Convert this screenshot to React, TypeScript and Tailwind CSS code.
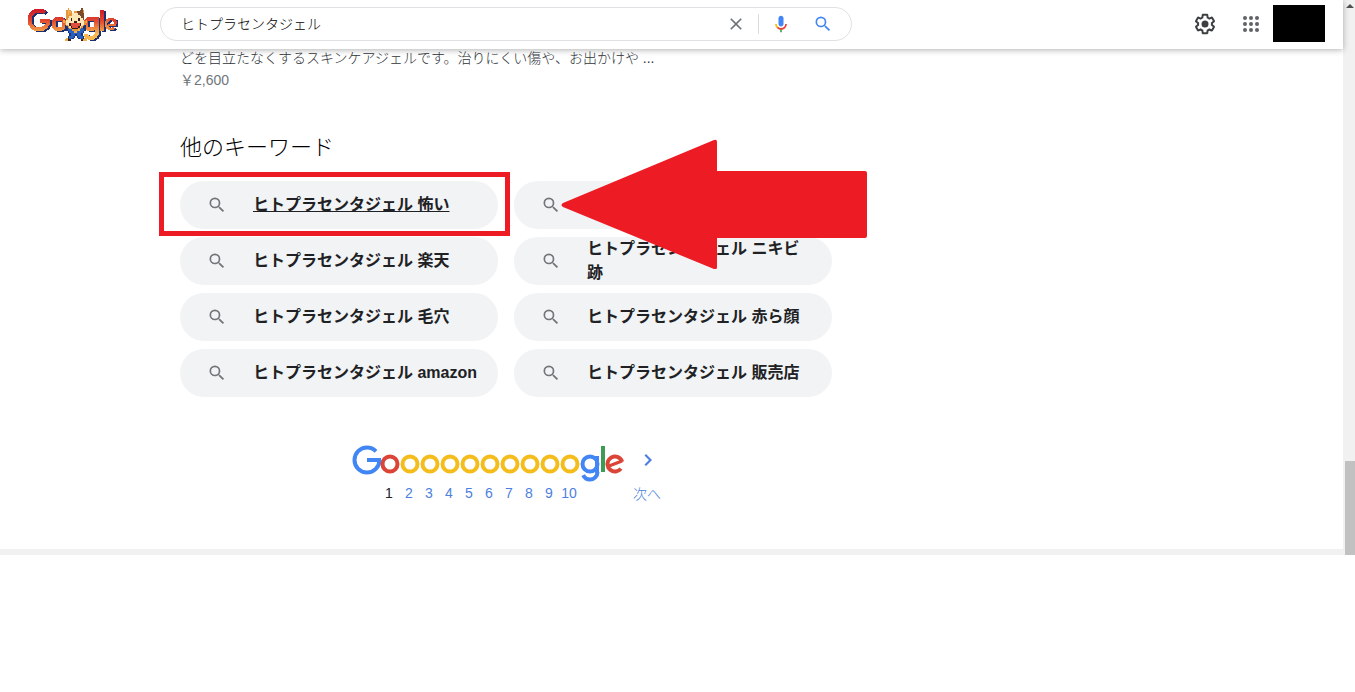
import type { ReactNode } from "react";

const keywords = [
  "ヒトプラセンタジェル 怖い",
  "ヒトプラセンタジェル 効果",
  "ヒトプラセンタジェル 楽天",
  "ヒトプラセンタジェル ニキビ跡",
  "ヒトプラセンタジェル 毛穴",
  "ヒトプラセンタジェル 赤ら顔",
  "ヒトプラセンタジェル amazon",
  "ヒトプラセンタジェル 販売店",
];

const pages = [2, 3, 4, 5, 6, 7, 8, 9, 10];

const catColors: Record<string, string> = {
  o: "#e8963c",
  b: "#7a4a2c",
  w: "#fbe6b4",
  k: "#3a1c20",
  r: "#e0503c",
  n: "#1c3478",
  u: "#2860c0",
  y: "#f0b050",
};

const cat = [
  "...o........b...",
  "..oyo......bbo..",
  "..oyyo.oobbbbo..",
  "..oyoowwwwbbbb..",
  "..oooowwwwwbbb..",
  "..oowwwwwwwwbb..",
  "..owwkwwwwkwwb..",
  "y.wwwkwwwwkwww.y",
  "yowwwwwkkwwwwwoy",
  ".owwkrrrrrrkwwo.",
  ".nowkrrrrrrkwon.",
  ".nnowkrrrrkwonn.",
  "..nuookkkkoounn.",
  "..nuuuooooyuuun.",
  "...nuuuyyuuuun..",
  "....nuuuuuuun...",
  "....nuuunuuun...",
  "...nuuun.nuuun..",
  "..ykuun...nuuky.",
  ".yykk.......kyyy",
];

const SearchIcon = ({ className }: { className: string }) => (
  <svg viewBox="0 0 24 24" className={className} fill="currentColor" aria-hidden="true">
    <path d="M15.5 14h-.79l-.28-.27A6.47 6.47 0 0 0 16 9.5 6.5 6.5 0 1 0 9.5 16c1.61 0 3.09-.59 4.23-1.57l.27.28v.79l5 4.99L20.49 19l-4.99-5zm-6 0a4.5 4.5 0 1 1 0-9 4.5 4.5 0 0 1 0 9z" />
  </svg>
);

const DoodleLetters = ({ paint }: { paint: string }) => (
  <g fill="none" stroke={paint} strokeWidth="4">
    <circle cx="13" cy="14" r="9.5" pathLength="360" strokeDasharray="310 50" />
    <rect x="14" y="13" width="10" height="4" fill={paint} stroke="none" />
    <circle cx="33" cy="18" r="5.5" />
    <circle cx="65" cy="18" r="5.5" />
    <rect x="69" y="11" width="4" height="16" fill={paint} stroke="none" />
    <circle cx="65" cy="26" r="6" pathLength="360" strokeDasharray="160 200" />
    <rect x="74" y="4" width="4" height="21" fill={paint} stroke="none" />
    <circle cx="85" cy="18" r="5" strokeWidth="3" pathLength="360" strokeDasharray="310 50" transform="rotate(50 85 18)" />
    <rect x="82" y="18" width="8" height="2" fill={paint} stroke="none" />
  </g>
);

const Doodle = () => (
  <svg viewBox="0 0 92 36" className="h-9 w-[92px]" shapeRendering="crispEdges" role="img" aria-label="Google">
    <defs>
      <linearGradient id="doodle" x1="0" y1="4" x2="0" y2="28" gradientUnits="userSpaceOnUse">
        <stop offset="0" stopColor="#d01c28" />
        <stop offset="0.45" stopColor="#e04830" />
        <stop offset="1" stopColor="#f8b850" />
      </linearGradient>
    </defs>
    <g transform="translate(2 1)">
      <DoodleLetters paint="#1c3070" />
    </g>
    <DoodleLetters paint="url(#doodle)" />
    {cat.map((row, y) =>
      row.split("").map((c, x) =>
        c === "." ? null : (
          <rect key={`${x}-${y}`} x={37 + x * 1.5} y={2 + y * 1.65} width="1.6" height="1.7" fill={catColors[c]} />
        ),
      ),
    )}
  </svg>
);

const Header = () => (
  <header className="relative flex h-[49px] items-center bg-white pb-0.5 shadow-[0_1px_6px_rgba(32,33,36,0.35)]">
    <a href="#top" className="ml-[26px] w-[134px] shrink-0">
      <Doodle />
    </a>
    <form className="flex h-[34px] w-[692px] items-center rounded-full border border-[#dfe1e5] bg-white pl-5">
      <input
        type="text"
        aria-label="検索"
        defaultValue="ヒトプラセンタジェル"
        className="min-w-0 flex-1 bg-transparent text-sm font-light text-black outline-none"
      />
      <button type="button" aria-label="クリア" className="mr-3 text-[#70757a]">
        <svg viewBox="0 0 24 24" className="size-5" fill="currentColor">
          <path d="M19 6.41 17.59 5 12 10.59 6.41 5 5 6.41 10.59 12 5 17.59 6.41 19 12 13.41 17.59 19 19 17.59 13.41 12z" />
        </svg>
      </button>
      <span className="h-5 w-px bg-[#dadce0]" />
      <button type="button" aria-label="音声検索" className="ml-3">
        <svg viewBox="0 0 24 24" className="size-5">
          <path fill="#4285f4" d="M12 15c1.66 0 3-1.31 3-2.97V4.98C15 3.32 13.66 2 12 2S9 3.32 9 4.98v7.05C9 13.69 10.34 15 12 15z" />
          <path fill="#34a853" d="M11 18.08h2V22h-2z" />
          <path fill="#fbbc04" d="M7.05 16.87C5.78 15.59 5 13.92 5 12h2c0 1.45.56 2.42 1.47 3.38v.32l-1.15 1.18z" />
          <path fill="#ea4335" d="M12 16.93a4.97 4.97 0 0 1-3.54-1.55l-1.41 1.49C8.31 18.14 9.99 19 12 19c3.87 0 6.99-2.92 6.99-7h-1.99c0 2.92-2.24 4.93-5 4.93z" />
        </svg>
      </button>
      <button type="submit" aria-label="検索を実行" className="mr-[18px] ml-[22px] text-[#4285f4]">
        <SearchIcon className="size-5" />
      </button>
    </form>
    <div className="mr-[18px] ml-auto flex items-center">
      <button type="button" aria-label="設定" className="text-[#3c4043]">
        <svg viewBox="0 0 24 24" className="size-6" fill="currentColor">
          <path d="M13.85 22.25h-3.7c-.74 0-1.36-.54-1.45-1.27l-.27-1.89c-.27-.14-.53-.29-.79-.46l-1.8.72c-.7.26-1.47-.03-1.81-.65L2.2 15.53c-.35-.66-.2-1.44.36-1.88l1.53-1.19c-.01-.15-.02-.3-.02-.46 0-.15.01-.31.02-.46l-1.52-1.19c-.59-.45-.74-1.26-.37-1.88l1.85-3.19c.34-.62 1.11-.9 1.79-.63l1.81.73c.26-.17.52-.32.78-.46l.27-1.91c.09-.7.71-1.25 1.44-1.25h3.7c.74 0 1.36.54 1.45 1.27l.27 1.89c.27.14.53.29.79.46l1.8-.72c.71-.26 1.48.03 1.82.65l1.84 3.18c.36.66.2 1.44-.36 1.88l-1.52 1.19c.01.15.02.3.02.46s-.01.31-.02.46l1.52 1.19c.56.45.72 1.23.37 1.86l-1.86 3.22c-.34.62-1.11.9-1.8.63l-1.8-.72c-.26.17-.52.32-.78.46l-.27 1.91c-.1.68-.72 1.22-1.46 1.22zm-3.23-2h2.76l.37-2.55.53-.22c.44-.18.88-.44 1.34-.78l.45-.34 2.38.96 1.38-2.4-2.03-1.58.07-.56c.03-.26.06-.51.06-.78s-.03-.53-.06-.78l-.07-.56 2.03-1.58-1.39-2.4-2.39.96-.45-.35c-.42-.32-.87-.58-1.33-.77l-.52-.22-.37-2.55h-2.76l-.37 2.55-.53.21c-.44.19-.88.44-1.34.79l-.45.33-2.38-.95-1.39 2.39 2.03 1.58-.07.56a7 7 0 0 0-.06.79c0 .26.02.53.06.78l.07.56-2.03 1.58 1.38 2.4 2.39-.96.45.35c.43.33.86.58 1.33.77l.53.22.38 2.55z" />
          <circle cx="12" cy="12" r="3.5" />
        </svg>
      </button>
      <button type="button" aria-label="Google アプリ" className="ml-[22px] text-[#5f6368]">
        <svg viewBox="0 0 24 24" className="size-6" fill="currentColor">
          {[6, 12, 18].map((y) => [6, 12, 18].map((x) => <circle key={`${x}-${y}`} cx={x} cy={y} r="2" />))}
        </svg>
      </button>
      <div className="ml-[10px] h-[37px] w-[52px] bg-black" />
    </div>
  </header>
);

const Marked = ({ children }: { children: ReactNode }) => (
  <div className="relative">
    {children}
    <div className="pointer-events-none absolute -top-[9px] -right-3 -bottom-[7px] -left-[21px] z-10 border-5 border-[#ed1c24]" />
    <svg viewBox="0 0 306 130" className="pointer-events-none absolute -top-[42px] left-[381px] z-10 h-[130px] w-[306px]">
      <path fill="#ed1c24" d="M2 64 153 1q3-1 3 2v29h148q2 0 2 2v63q0 2-2 2H156v29q0 3-3 2L2 68q-3-2 0-4z" />
    </svg>
  </div>
);

const Keyword = ({ text, underlined }: { text: string; underlined?: boolean }) => (
  <a href="#search" className="flex h-12 items-center rounded-full bg-[#f1f3f4] pr-5 pl-[27px] text-[#202124]">
    <SearchIcon className="size-5 shrink-0 text-[#70757a]" />
    <span className={`ml-[26px] text-base leading-6 font-bold ${underlined ? "underline" : ""}`}>{text}</span>
  </a>
);

const PageLogo = () => (
  <svg viewBox="0 0 272 38" className="h-[38px] w-[272px]" fill="none" strokeWidth="4" role="img" aria-label="Google">
    <g stroke="#4285f4">
      <circle cx="15" cy="15" r="12.5" pathLength="360" strokeDasharray="316 44" />
      <rect x="15" y="13" width="14" height="4" fill="#4285f4" stroke="none" />
    </g>
    <circle cx="38" cy="19" r="7.5" stroke="#db4437" />
    {pages.map((page, i) => (
      <circle key={page} cx={58 + i * 20} cy="19" r="7.5" stroke="#f4bd1c" />
    ))}
    <g stroke="#4285f4">
      <circle cx="238" cy="19" r="7.5" />
      <circle cx="238" cy="27" r="7.5" pathLength="360" strokeDasharray="155 205" />
      <rect x="243" y="11" width="4" height="17" fill="#4285f4" stroke="none" />
    </g>
    <rect x="249" y="1" width="4" height="26" fill="#3c9c55" />
    <g stroke="#db4437">
      <circle cx="263" cy="19" r="7.5" pathLength="360" strokeDasharray="305 55" transform="rotate(38 263 19)" />
      <line x1="257" y1="21" x2="270" y2="16" strokeWidth="3" />
    </g>
  </svg>
);

const Pagination = () => (
  <nav aria-label="ページ" className="mt-12 ml-[172px] flex text-[#4d7fe0]">
    <div>
      <PageLogo />
      <div className="ml-[27px] flex text-sm leading-5">
        <span className="w-5 text-center text-[#202124]">1</span>
        {pages.map((page) => (
          <a key={page} href="#page" className="w-5 text-center">
            {page}
          </a>
        ))}
      </div>
    </div>
    <a href="#next" className="ml-[9px] flex flex-col text-sm leading-5 font-light">
      <svg viewBox="0 0 24 24" className="mt-[3px] ml-[3px] size-6" fill="currentColor" aria-hidden="true">
        <path d="M8.5 7.4 10 6l6 6-6 6-1.5-1.4L13 12z" />
      </svg>
      <span className="mt-3">次へ</span>
    </a>
  </nav>
);

export default function App() {
  return (
    <div className="min-h-screen bg-white font-['Liberation_Sans','Noto_Sans_CJK_JP',sans-serif]">
      <div className="flex">
        <div className="min-w-0 flex-1">
          <Header />
          <main className="ml-[180px] w-[652px] pb-[45px]">
            <p className="-mt-px text-sm leading-5 font-light whitespace-nowrap text-[#303438]">
              どを目立たなくするスキンケアジェルです。治りにくい傷や、お出かけや ...
            </p>
            <p className="mt-[2px] text-sm leading-5 text-[#70757a]">￥2,600</p>
            <h2 className="mt-11 text-[22px] leading-7 font-light text-black">他のキーワード</h2>
            <div className="mt-[19px] grid grid-cols-2 gap-x-4 gap-y-2">
              {keywords.map((text, i) =>
                i === 0 ? (
                  <Marked key={text}>
                    <Keyword text={text} underlined />
                  </Marked>
                ) : (
                  <Keyword key={text} text={text} />
                ),
              )}
            </div>
            <Pagination />
          </main>
          <footer className="h-[6px] bg-[#f1f1f1]" />
        </div>
        <div className="flex w-3 flex-col items-end bg-[#f1f1f1]">
          <svg viewBox="0 0 10 10" className="size-[10px]" fill="#505050">
            <path d="M1 8 5 4l4 4z" />
          </svg>
          <div className="mt-auto h-[94px] w-[10px] bg-[#c1c1c1]" />
        </div>
      </div>
    </div>
  );
}
